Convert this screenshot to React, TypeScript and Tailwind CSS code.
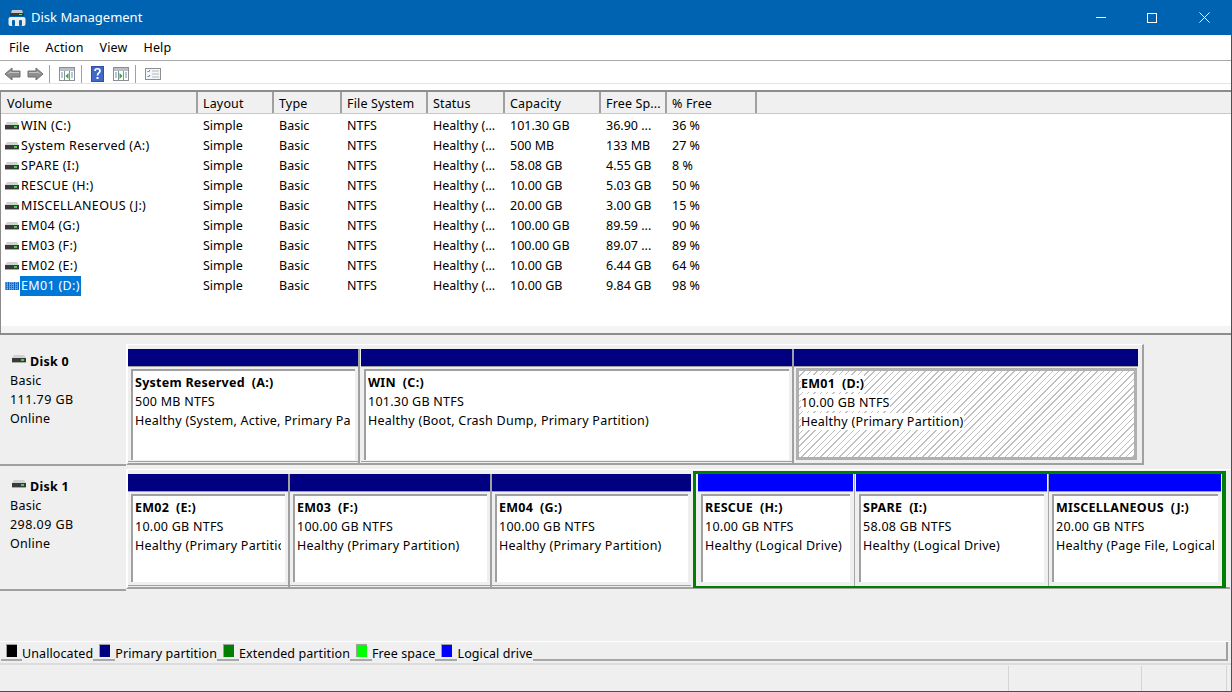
import React from "react";

const cols = [
  { t: "Volume", w: 195 },
  { t: "Layout", w: 76 },
  { t: "Type", w: 68 },
  { t: "File System", w: 86 },
  { t: "Status", w: 77 },
  { t: "Capacity", w: 96 },
  { t: "Free Sp...", w: 66 },
  { t: "% Free", w: 90 },
];

const rows = [
  ["WIN (C:)", "Simple", "Basic", "NTFS", "Healthy (...", "101.30 GB", "36.90 ...", "36 %"],
  ["System Reserved (A:)", "Simple", "Basic", "NTFS", "Healthy (...", "500 MB", "133 MB", "27 %"],
  ["SPARE (I:)", "Simple", "Basic", "NTFS", "Healthy (...", "58.08 GB", "4.55 GB", "8 %"],
  ["RESCUE (H:)", "Simple", "Basic", "NTFS", "Healthy (...", "10.00 GB", "5.03 GB", "50 %"],
  ["MISCELLANEOUS (J:)", "Simple", "Basic", "NTFS", "Healthy (...", "20.00 GB", "3.00 GB", "15 %"],
  ["EM04 (G:)", "Simple", "Basic", "NTFS", "Healthy (...", "100.00 GB", "89.59 ...", "90 %"],
  ["EM03 (F:)", "Simple", "Basic", "NTFS", "Healthy (...", "100.00 GB", "89.07 ...", "89 %"],
  ["EM02 (E:)", "Simple", "Basic", "NTFS", "Healthy (...", "10.00 GB", "6.44 GB", "64 %"],
  ["EM01 (D:)", "Simple", "Basic", "NTFS", "Healthy (...", "10.00 GB", "9.84 GB", "98 %"],
];

function Drive({ selected }: { selected?: boolean }) {
  if (selected) {
    return (
      <svg width="14" height="10" viewBox="0 0 14 10" className="shrink-0">
        <rect x="0" y="1" width="14" height="8" fill="#0a64c8" />
        <path d="M0 2h14M0 4h14M0 6h14M0 8h14M2 1v8M5 1v8M8 1v8M11 1v8" stroke="#9cc8f0" strokeWidth="1" strokeDasharray="1 1" />
      </svg>
    );
  }
  return (
    <svg width="14" height="10" viewBox="0 0 14 10" className="shrink-0">
      <path d="M2 1h10l2 3H0z" fill="#d2d2d2" />
      <rect x="0" y="4" width="14" height="4" fill="#3a3a3a" />
      <rect x="9" y="5" width="3" height="2" fill="#3fd24a" />
      <rect x="0" y="8" width="14" height="1" fill="#a8a8a8" />
    </svg>
  );
}

function Arrow({ flip }: { flip?: boolean }) {
  return (
    <svg width="17" height="14" viewBox="0 0 17 14" style={flip ? { transform: "scaleX(-1)" } : undefined}>
      <path d="M1 7 8 1v3h8v6H8v3z" fill="#8f8f8f" stroke="#6e6e6e" />
      <path d="M3 7l4-3v1h8v1H6z" fill="#c4c4c4" />
    </svg>
  );
}

function PanelIcon({ arrow }: { arrow: "left" | "right" }) {
  return (
    <svg width="16" height="14" viewBox="0 0 16 14">
      <rect x="0.5" y="0.5" width="15" height="13" fill="#fff" stroke="#8a8f96" />
      <rect x="1" y="1" width="14" height="3" fill="#b9bec4" />
      <path d="M5.5 4v10M10.5 4v10" stroke="#8a8f96" />
      <path d="M2 6h2M2 8h2M2 10h2M12 6h2M12 8h2M12 10h2" stroke="#6f8fb4" />
      {arrow === "left" ? <path d="M9.5 6v6L6.5 9z" fill="#27a83a" /> : <path d="M6.5 6v6l3-3z" fill="#27a83a" />}
    </svg>
  );
}

function Help() {
  return (
    <svg width="13" height="16" viewBox="0 0 13 16">
      <rect width="13" height="16" fill="#2f4fa8" />
      <rect x="1" y="1" width="11" height="14" fill="#3f68c8" />
      <path d="M4 5c0-3 5-3 5 0 0 2-2.500 2-2.500 4.500" fill="none" stroke="#fff" strokeWidth="1.700" />
      <rect x="5.500" y="11" width="2" height="2" fill="#fff" />
    </svg>
  );
}

function Checklist() {
  return (
    <svg width="16" height="12" viewBox="0 0 16 12">
      <rect x="0.5" y="0.5" width="15" height="11" fill="#f4f6f8" stroke="#8a8f96" />
      <path d="M2.500 3l1 1 1.500-2M2.500 8l1 1 1.500-2" fill="none" stroke="#2f7fd0" />
      <path d="M7 3h7M7 6h7M7 9h7" stroke="#b5b9be" />
    </svg>
  );
}

function Sep() {
  return <div className="h-[18px] w-px bg-[#a0a0a0]" />;
}

type PartProps = {
  w: number;
  h: number;
  boxH: number;
  name: string;
  size: string;
  status: string;
  logical?: boolean;
  selected?: boolean;
};

function Partition({ w, h, boxH, name, size, status, logical, selected }: PartProps) {
  return (
    <div
      className={`flex shrink-0 flex-col bg-[#efefef] ${logical || selected ? "" : "border-b border-[#a0a0a0]"}`}
      style={{ width: w, height: h }}
    >
      <div className={`h-[17px] shrink-0 ${logical ? "bg-[#0000ff]" : "bg-[#000080]"}`} />
      <div className="h-px shrink-0 bg-[#a0a0a0]" />
      {selected ? (
        <div
          className="ml-[2px] mr-[1px] mt-[1px] overflow-hidden border-[3px] border-[#b0b0b0] bg-[repeating-linear-gradient(135deg,#ffffff_0px,#ffffff_3.500px,#c0c0c0_3.500px,#c0c0c0_4.500px)] pl-[2px] pt-[3px]"
          style={{ height: boxH + 1 }}
        >
          <PartText name={name} size={size} status={status} boxed />
        </div>
      ) : (
        <div
          className="mx-[3px] mt-[2px] overflow-hidden border-l-2 border-t-2 border-[#a0a0a0] bg-white pl-[2px] pt-[2px]"
          style={{ height: boxH }}
        >
          <PartText name={name} size={size} status={status} />
        </div>
      )}
    </div>
  );
}

function PartText({ name, size, status, boxed }: { name: string; size: string; status: string; boxed?: boolean }) {
  const c = boxed ? "bg-white" : "";
  return (
    <div className="mr-[4px] flex flex-col overflow-hidden whitespace-pre tracking-[0.25px] text-black">
      <div className="h-[19px] font-bold leading-[19px]"><span className={c}>{name}</span></div>
      <div className="h-[19px] leading-[19px]"><span className={c}>{size}</span></div>
      <div className="h-[19px] leading-[19px]"><span className={c}>{status}</span></div>
    </div>
  );
}

function Div() {
  return <div className="h-full w-[2px] shrink-0 bg-[#a0a0a0]" />;
}

function LogicalDiv({ w }: { w: number }) {
  return (
    <div className="flex h-full shrink-0 justify-center bg-[#efefef]" style={{ width: w }}>
      <div className="h-full w-px bg-[#a8a8a8]" />
    </div>
  );
}

function DiskLabel({ name, cap, h, pt }: { name: string; cap: string; h: number; pt: number }) {
  return (
    <div className="w-[126px] shrink-0 border-b-2 border-[#a0a0a0] bg-[#efefef] pl-[10px] tracking-[0.25px]" style={{ height: h, paddingTop: pt }}>
      <div className="flex h-[19px] items-center gap-[4px]">
        <span className="-mt-[6px] ml-[2px]"><Drive /></span>
        <span className="font-bold leading-[19px]">{name}</span>
      </div>
      <div className="h-[19px] leading-[19px]">Basic</div>
      <div className="h-[19px] leading-[19px] tracking-[0.45px]">{cap}</div>
      <div className="h-[19px] leading-[19px]">Online</div>
    </div>
  );
}

const legend = [
  { c: "bg-black", t: "Unallocated" },
  { c: "bg-[#000080]", t: "Primary partition" },
  { c: "bg-[#008000]", t: "Extended partition" },
  { c: "bg-[#00ff00]", t: "Free space" },
  { c: "bg-[#0000ff]", t: "Logical drive" },
];

export default function App() {
  return (
    <div
      className="flex h-[692px] w-[1232px] flex-col overflow-hidden border-b border-r border-[#0063b1] bg-[#efefef] text-[12.500px] text-black"
      style={{ fontFamily: '"Noto Sans", sans-serif' }}
    >
      {/* Title bar */}
      <div className="flex h-[35px] shrink-0 items-center bg-[#0063b1] pl-[8px] text-white">
        <svg width="18" height="18" viewBox="0 0 18 18" className="shrink-0">
          <path d="M4 1h10l2 6H2z" fill="#c8c8c8" />
          <rect x="2" y="4" width="14" height="3" fill="#3a3a3a" />
          <rect x="11" y="5" width="3" height="1" fill="#5fe06a" />
          <rect x="0.500" y="8" width="17" height="9" rx="2" fill="#ececec" />
          <rect x="4" y="11" width="3" height="6" rx="1" fill="#0063b1" />
          <rect x="11" y="11" width="3" height="6" rx="1" fill="#0063b1" />
        </svg>
        <span className="ml-[5px] text-[13px]">Disk Management</span>
        <div className="ml-auto flex items-center">
          <div className="flex h-[35px] w-[51px] items-center justify-center">
            <div className="h-px w-[10px] bg-white" />
          </div>
          <div className="flex h-[35px] w-[51px] items-center justify-center">
            <div className="h-[10px] w-[10px] border border-white" />
          </div>
          <div className="flex h-[35px] w-[54px] items-center justify-center">
            <svg width="11" height="11" viewBox="0 0 11 11">
              <path d="M0.500 0.500l10 10M10.500 0.500l-10 10" stroke="#fff" strokeWidth="1" />
            </svg>
          </div>
        </div>
      </div>

      {/* Menu */}
      <div className="flex h-[25px] shrink-0 items-center gap-[16px] bg-white pl-[9px] pt-[2px] tracking-[0.15px]">
        <span>File</span>
        <span>Action</span>
        <span>View</span>
        <span>Help</span>
      </div>

      {/* Toolbar */}
      <div className="flex h-[24px] shrink-0 items-center border-b border-t border-b-[#e4e4e4] border-t-[#a8a8a8] bg-white pl-[4px] pt-[3px]">
        <Arrow />
        <span className="ml-[6px]"><Arrow flip /></span>
        <span className="ml-[5px]"><Sep /></span>
        <span className="ml-[9px]"><PanelIcon arrow="left" /></span>
        <span className="ml-[6px]"><Sep /></span>
        <span className="ml-[9px]"><Help /></span>
        <span className="ml-[9px]"><PanelIcon arrow="right" /></span>
        <span className="ml-[6px]"><Sep /></span>
        <span className="ml-[9px]"><Checklist /></span>
      </div>
      <div className="h-[6px] shrink-0 bg-white" />

      {/* Volume list */}
      <div className="flex h-[245px] shrink-0 flex-col border-b-2 border-l border-t-2 border-[#8c8c8c] bg-white">
        <div className="flex h-[22px] shrink-0 border-b border-[#c8c8c8] bg-[#f0f0f0] pl-[2px] tracking-[0.15px]">
          {cols.map((c, i) => (
            <div
              key={c.t}
              className="flex h-full shrink-0 items-center whitespace-nowrap border-r-2 border-[#a0a0a0] pt-[3px]"
              style={{ width: c.w, paddingLeft: i === 0 ? 4 : 5 }}
            >
              {c.t}
            </div>
          ))}
        </div>
        <div className="min-h-0 flex-1 pt-[2px]">
          {rows.map((r, i) => {
            const sel = i === rows.length - 1;
            return (
              <div key={r[0]} className="flex h-[20px] pl-[2px]">
                {r.map((v, j) => (
                  <div key={j} className="flex h-full shrink-0 items-center whitespace-nowrap" style={{ width: cols[j].w, paddingLeft: j === 0 ? 2 : 5 }}>
                    {j === 0 ? (
                      <>
                        <Drive selected={sel} />
                        <span className={`ml-px px-px leading-[20px] tracking-[0.33px] ${sel ? "bg-[#0078d7] text-white" : ""}`}>{v}</span>
                      </>
                    ) : (
                      v
                    )}
                  </div>
                ))}
              </div>
            );
          })}
        </div>
        <div className="h-[7px] shrink-0 bg-[#f4f4f4]" />
      </div>

      {/* Disks */}
      <div className="h-[306px] shrink-0 bg-[#efefef]">
        <div className="flex h-[131px]">
          <DiskLabel name="Disk 0" cap="111.79 GB" h={131} pt={17} />
          <div className="mt-[9px] flex h-[121px] w-[1018px] border-b-2 border-l-2 border-r-2 border-t border-b-[#a0a0a0] border-l-white border-r-[#a0a0a0] border-t-white pt-[4px]">
            <Partition w={230} h={113} boxH={91} name="System Reserved  (A:)" size="500 MB NTFS" status="Healthy (System, Active, Primary Partition)" />
            <div className="h-full w-[3px] shrink-0 border-l-2 border-[#a0a0a0]" />
            <Partition w={431} h={113} boxH={91} name="WIN  (C:)" size="101.30 GB NTFS" status="Healthy (Boot, Crash Dump, Primary Partition)" />
            <Div />
            <Partition w={344} h={113} boxH={91} name="EM01  (D:)" size="10.00 GB NTFS" status="Healthy (Primary Partition)" selected />
          </div>
        </div>
        <div className="flex h-[125px]">
          <DiskLabel name="Disk 1" cap="298.09 GB" h={125} pt={11} />
          <div className="mt-[3px] flex h-[120px] w-[1104px] border-b-2 border-l-2 border-t border-b-[#a0a0a0] border-l-white border-t-white pt-[4px]">
            <Partition w={160} h={112} boxH={88} name="EM02  (E:)" size="10.00 GB NTFS" status="Healthy (Primary Partition)" />
            <Div />
            <Partition w={200} h={112} boxH={88} name="EM03  (F:)" size="100.00 GB NTFS" status="Healthy (Primary Partition)" />
            <Div />
            <Partition w={199} h={112} boxH={88} name="EM04  (G:)" size="100.00 GB NTFS" status="Healthy (Primary Partition)" />
            <div className="-mt-[3px] ml-[2px] flex h-[117px] w-[533px] border-b-2 border-l-[3px] border-r-[4px] border-t-[3px] border-[#008000] pl-[2px]">
              <Partition w={155} h={112} boxH={88} logical name="RESCUE  (H:)" size="10.00 GB NTFS" status="Healthy (Logical Drive)" />
              <LogicalDiv w={3} />
              <Partition w={191} h={112} boxH={88} logical name="SPARE  (I:)" size="58.08 GB NTFS" status="Healthy (Logical Drive)" />
              <LogicalDiv w={2} />
              <Partition w={172} h={112} boxH={88} logical name="MISCELLANEOUS  (J:)" size="20.00 GB NTFS" status="Healthy (Page File, Logical Drive)" />
            </div>
          </div>
        </div>
      </div>

      {/* Legend */}
      <div className="flex h-[20px] shrink-0 items-end border-t border-white pl-[1px] pr-[3px]">
        <div className="flex h-full flex-1 items-end border-r-2 border-[#a0a0a0]">
          {legend.map((l, i) => (
            <div key={l.t} className="flex h-full items-end">
              <div className="flex h-full items-start border-b-2 border-[#a8a8a8] pr-[5px] pt-[2px]" style={{ paddingLeft: i === 0 ? 5 : 6 }}>
                <div className={`h-[13px] w-[11px] border-l border-t border-[#a0a0a0] ${l.c}`} />
              </div>
              <span className="-mb-[2px] whitespace-nowrap leading-[19px] tracking-[0.1px]">{l.t}</span>
            </div>
          ))}
          <div className="h-full flex-1 border-b-2 border-[#a8a8a8]" />
        </div>
      </div>

      {/* Status bar */}
      <div className="mt-[2px] flex min-h-0 flex-1 border-t-2 border-[#dcdcdc] pt-px">
        <div className="w-[1009px] border-r border-[#d4d4d4]" />
        <div className="w-[133px] border-r border-[#d4d4d4]" />
        <div className="w-[85px] border-r border-[#d4d4d4]" />
      </div>
    </div>
  );
}
